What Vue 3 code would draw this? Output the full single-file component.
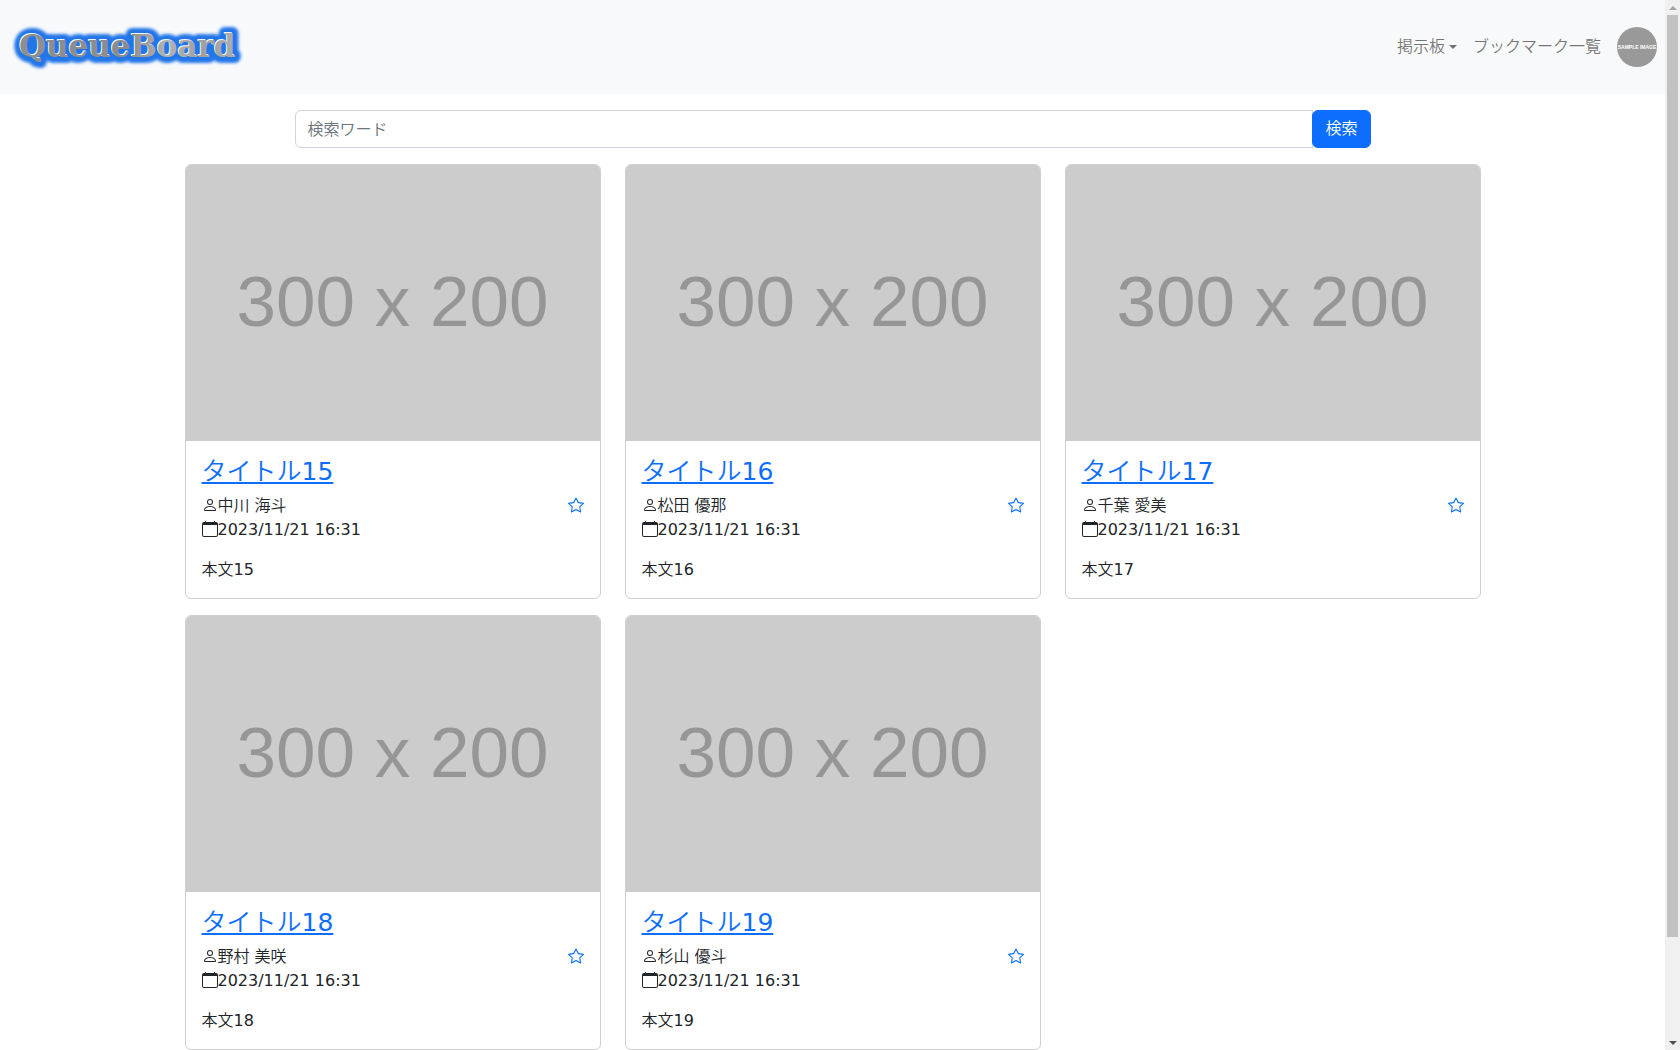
<script setup>
import { onBeforeUnmount, onMounted, ref } from 'vue'

const keyword = ref('')

const boards = [
  { id: 15, author: '中川 海斗' },
  { id: 16, author: '松田 優那' },
  { id: 17, author: '千葉 愛美' },
  { id: 18, author: '野村 美咲' },
  { id: 19, author: '杉山 優斗' },
].map((b) => ({ ...b, title: `タイトル${b.id}`, body: `本文${b.id}`, date: '2023/11/21 16:31' }))

// Scrollbar thumb, as percentages of the track
const page = ref(null)
const thumbSize = ref(90)
const thumbOffset = ref(0)

function updateThumb() {
  const el = page.value
  thumbSize.value = (el.clientHeight / el.scrollHeight) * 100
  thumbOffset.value = (el.scrollTop / el.scrollHeight) * 100
}

onMounted(() => {
  updateThumb()
  window.addEventListener('resize', updateThumb)
})
onBeforeUnmount(() => window.removeEventListener('resize', updateThumb))
</script>

<template>
  <div class="shell">
    <div ref="page" class="page" @scroll="updateThumb">
      <header class="navbar">
        <a class="brand" href="#" aria-label="QueueBoard">
          <svg width="232" height="60" viewBox="0 0 232 60">
            <defs>
              <linearGradient id="metal" x1="0" y1="0" x2="1" y2="0">
                <stop offset="0" stop-color="#8e8e8e" />
                <stop offset="0.5" stop-color="#8c8c8c" />
                <stop offset="0.68" stop-color="#b2b2b2" />
                <stop offset="0.85" stop-color="#a0a0a0" />
                <stop offset="1" stop-color="#acacac" />
              </linearGradient>
              <filter id="glow" x="-10%" y="-40%" width="120%" height="180%">
                <feGaussianBlur stdDeviation="1.6" />
              </filter>
            </defs>
            <text class="logo logo-glow" x="7" y="40" filter="url(#glow)">QueueBoard</text>
            <text class="logo logo-edge" x="6" y="39">QueueBoard</text>
            <text class="logo" x="7" y="40" fill="url(#metal)">QueueBoard</text>
          </svg>
        </a>
        <nav class="menu">
          <a class="nav-link dropdown" href="#">掲示板</a>
          <a class="nav-link" href="#">ブックマーク一覧</a>
          <a class="nav-link" href="#" aria-label="プロフィール">
            <span class="avatar">SAMPLE IMAGE</span>
          </a>
        </nav>
      </header>

      <main class="container">
        <form class="search" @submit.prevent>
          <input v-model="keyword" class="search-input" type="search" placeholder="検索ワード" aria-label="検索ワード" />
          <button class="search-button" type="submit">検索</button>
        </form>

        <div class="boards">
          <article v-for="board in boards" :key="board.id" class="card">
            <div class="thumb">300 x 200</div>
            <div class="card-body">
              <h4 class="card-title"><a href="#">{{ board.title }}</a></h4>
              <div class="meta">
                <ul class="details">
                  <li>
                    <svg class="icon" viewBox="0 0 16 16" fill="currentColor">
                      <path d="M8 8a3 3 0 1 0 0-6 3 3 0 0 0 0 6zm2-3a2 2 0 1 1-4 0 2 2 0 0 1 4 0zm4 8c0 1-1 1-1 1H3s-1 0-1-1 1-4 6-4 6 3 6 4zm-1-.004c-.001-.246-.154-.986-.832-1.664C11.516 10.68 10.289 10 8 10c-2.29 0-3.516.68-4.168 1.332-.678.678-.83 1.418-.832 1.664h10z" />
                    </svg>{{ board.author }}
                  </li>
                  <li>
                    <svg class="icon" viewBox="0 0 16 16" fill="currentColor">
                      <path d="M3.5 0a.5.5 0 0 1 .5.5V1h8V.5a.5.5 0 0 1 1 0V1h1a2 2 0 0 1 2 2v11a2 2 0 0 1-2 2H2a2 2 0 0 1-2-2V3a2 2 0 0 1 2-2h1V.5a.5.5 0 0 1 .5-.5zM1 4v10a1 1 0 0 0 1 1h12a1 1 0 0 0 1-1V4H1z" />
                    </svg>{{ board.date }}
                  </li>
                </ul>
                <a class="bookmark" href="#" aria-label="ブックマーク">
                  <svg class="icon" viewBox="0 0 16 16" fill="currentColor">
                    <path d="M2.866 14.85c-.078.444.36.791.746.593l4.39-2.256 4.389 2.256c.386.198.824-.149.746-.592l-.83-4.73 3.522-3.356c.33-.314.16-.888-.282-.95l-4.898-.696L8.465.792a.513.513 0 0 0-.927 0L5.354 5.12l-4.898.696c-.441.062-.612.636-.283.95l3.523 3.356-.83 4.73zm4.905-2.767-3.686 1.894.694-3.957a.565.565 0 0 0-.163-.505L1.71 6.745l4.052-.576a.525.525 0 0 0 .393-.288L8 2.223l1.847 3.658a.525.525 0 0 0 .393.288l4.052.575-2.906 2.77a.565.565 0 0 0-.163.506l.694 3.957-3.686-1.894a.503.503 0 0 0-.461 0z" />
                  </svg>
                </a>
              </div>
              <p class="card-text">{{ board.body }}</p>
            </div>
          </article>
        </div>
      </main>
    </div>

    <div class="scrollbar" aria-hidden="true">
      <span class="arrow arrow-up"></span>
      <div class="track">
        <div :style="{ height: thumbOffset + '%' }"></div>
        <div class="scroll-thumb" :style="{ height: thumbSize + '%' }"></div>
      </div>
      <span class="arrow arrow-down"></span>
    </div>
  </div>
</template>

<style>
body {
  margin: 0;
}
</style>

<style scoped>
* {
  box-sizing: border-box;
}

.shell {
  display: flex;
  height: 100vh;
}

.page {
  flex: 1;
  min-width: 0;
  overflow-y: auto;
  scrollbar-width: none;
  background: #fff;
  color: #212529;
  font-family: "DejaVu Sans", "Noto Sans CJK JP DemiLight", "Noto Sans CJK JP", sans-serif;
  font-size: 16px;
  line-height: 24px;
}

.navbar {
  display: flex;
  align-items: center;
  justify-content: space-between;
  min-height: 94px;
  padding: 8px 0 8px 12px;
  background: #f8f9fa;
}

.brand {
  display: flex;
}

.logo {
  font-family: "DejaVu Serif", serif;
  font-weight: 700;
  font-size: 31px;
}

.logo-glow {
  fill: #2176e8;
  stroke: #2176e8;
  stroke-width: 12px;
  stroke-linejoin: round;
}

.logo-edge {
  fill: #f4f8ff;
}

.menu {
  display: flex;
  align-items: center;
}

.nav-link {
  display: flex;
  align-items: center;
  padding: 8px;
  color: rgba(0, 0, 0, 0.55);
  text-decoration: none;
}

.dropdown::after {
  content: "";
  margin-left: 4px;
  border-top: 4px solid;
  border-right: 4px solid transparent;
  border-left: 4px solid transparent;
}

.avatar {
  display: flex;
  align-items: center;
  justify-content: center;
  width: 40px;
  height: 40px;
  border-radius: 50%;
  background: #999;
  color: #fff;
  font: 700 5px "Liberation Sans", sans-serif;
  white-space: nowrap;
}

.container {
  max-width: 1320px;
  margin: 0 auto;
  padding: 16px 12px 112px;
}

.search {
  display: flex;
  max-width: 1076px;
  margin: 0 auto 16px;
}

.search-input,
.search-button {
  height: 38px;
  padding: 6px 12px;
  border: 1px solid #ced4da;
  border-radius: 6px;
  font: inherit;
}

.search-input {
  flex: 1;
  min-width: 0;
  border-radius: 6px 0 0 6px;
  background: #fff;
  appearance: none;
}

.search-input::placeholder {
  color: #6c757d;
  opacity: 1;
}

.search-button {
  margin-left: -1px;
  border-color: #0d6efd;
  background: #0d6efd;
  color: #fff;
}

.boards {
  display: grid;
  grid-template-columns: repeat(3, minmax(0, 1fr));
  gap: 16px 24px;
}

.card {
  overflow: hidden;
  border: 1px solid #d0d0d1;
  border-radius: 6px;
}

.thumb {
  display: flex;
  align-items: center;
  justify-content: center;
  aspect-ratio: 3 / 2;
  padding-bottom: 4px;
  background: #ccc;
  color: #969696;
  font: 71px "Liberation Sans", sans-serif;
}

.card-body {
  padding: 16px;
}

.card-title {
  margin: 0 0 8px;
  font-weight: 400;
  font-size: 25px;
  line-height: 29px;
}

.card-title a,
.bookmark {
  color: #0d6efd;
}

.meta {
  display: flex;
  justify-content: space-between;
  margin-bottom: 16px;
}

.details {
  margin: 0;
  padding: 0;
  list-style: none;
}

.icon {
  width: 16px;
  height: 16px;
  vertical-align: -2px;
}

.card-text {
  margin: 0;
}

.scrollbar {
  display: flex;
  flex: none;
  flex-direction: column;
  width: 15px;
  background: #f0f0f0;
}

.arrow {
  display: flex;
  align-items: center;
  justify-content: center;
  height: 15px;
}

.arrow::before {
  content: "";
  border-right: 4px solid transparent;
  border-left: 4px solid transparent;
}

.arrow-up::before {
  border-bottom: 4px solid #a3a3a3;
}

.arrow-down::before {
  border-top: 4px solid #505050;
}

.track {
  flex: 1;
  min-height: 0;
  padding: 0 2px;
}

.scroll-thumb {
  background: #c1c1c1;
}
</style>
